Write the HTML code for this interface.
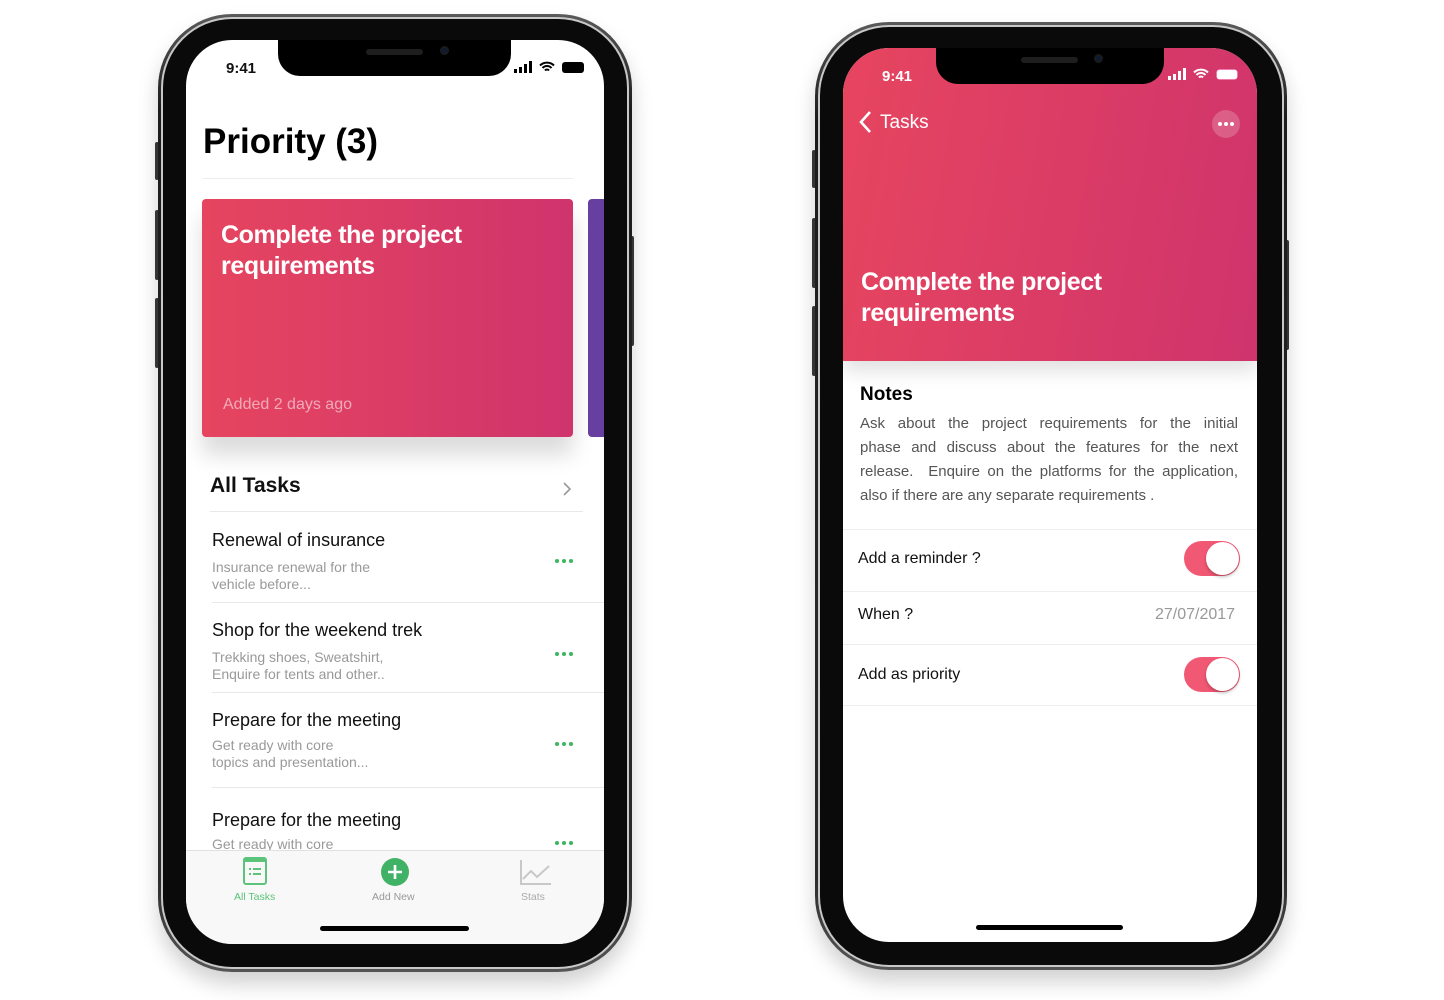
<!DOCTYPE html>
<html><head><meta charset="utf-8"><style>
*{margin:0;padding:0;box-sizing:border-box}
body{width:1444px;height:1000px;background:#fff;position:relative;overflow:hidden;font-family:"Liberation Sans",sans-serif}
.a{position:absolute}
.frame{position:absolute;border-radius:74px;background:linear-gradient(180deg,#5a5a5a,#1c1c1c 10%,#2a2a2a 90%,#555);box-shadow:0 12px 20px rgba(0,0,0,.18);}
.frame .in1{position:absolute;inset:3px;border-radius:71px;background:#c8c8c8}
.frame .in2{position:absolute;inset:5px;border-radius:69px;background:#0a0a0a}
.screen{position:absolute;border-radius:46px;overflow:hidden;background:#fff}
.notch{position:absolute;background:#000;border-radius:0 0 22px 22px}
.spk{position:absolute;height:6px;border-radius:3px;background:#1e1e1e}
.cam{position:absolute;width:9px;height:9px;border-radius:50%;background:#0e1a33;border:2px solid #1b1b1b}
.btn{position:absolute;background:#3a3a3a;border-radius:2px}
.t{position:absolute;white-space:nowrap;line-height:1}
.sep{position:absolute;height:1px;background:#e8e8e8}
.dots{position:absolute;width:18px;height:4px}
.dots i{position:absolute;top:0;width:4px;height:4px;border-radius:50%;background:#3cb55f}
.tog{position:absolute;width:56px;height:35px;border-radius:18px;background:#f15873}
.tog i{position:absolute;right:1px;top:1px;width:33px;height:33px;border-radius:50%;background:#fff;box-shadow:0 2px 3px rgba(0,0,0,.25)}
.jl{display:block;text-align:justify;text-align-last:justify;height:24px;white-space:nowrap}
</style></head><body>

<!-- LEFT PHONE -->
<div class="btn" style="left:155px;top:142px;width:4px;height:38px"></div>
<div class="btn" style="left:155px;top:210px;width:4px;height:70px"></div>
<div class="btn" style="left:155px;top:298px;width:4px;height:70px"></div>
<div class="btn" style="left:630px;top:236px;width:4px;height:110px"></div>
<div class="frame" style="left:158px;top:14px;width:474px;height:958px"><div class="in1"></div><div class="in2"></div></div>
<div class="screen" style="left:186px;top:40px;width:418px;height:904px">
  <div class="t" style="left:40px;top:21px;font-size:15px;font-weight:bold;color:#111">9:41</div>
  <svg class="a" style="left:328px;top:21px" width="72" height="14" viewBox="0 0 72 14">
    <rect x="0" y="8" width="3" height="4" fill="#000"/><rect x="5" y="6" width="3" height="6" fill="#000"/><rect x="10" y="3" width="3" height="9" fill="#000"/><rect x="15" y="0" width="3" height="12" fill="#000"/>
    <path d="M26 4.5a10 10 0 0 1 14 0M28.5 7a6 6 0 0 1 9 0M31 9.5a2.5 2.5 0 0 1 4 0" stroke="#000" stroke-width="2" fill="none"/>
    <rect x="48" y="1" width="22" height="11" rx="3" fill="#000"/>
  </svg>
  <div class="t" style="left:17px;top:84px;font-size:35px;font-weight:bold;color:#000">Priority (3)</div>
  <div class="sep" style="left:17px;top:138px;width:370px;background:#ececec"></div>
  <div class="a" style="left:16px;top:159px;width:371px;height:238px;border-radius:4px;background:linear-gradient(90deg,#e6455f,#cf346c);box-shadow:0 18px 22px rgba(0,0,0,.14)"></div>
  <div class="a" style="left:402px;top:159px;width:20px;height:238px;border-radius:4px;background:#673fa1"></div>
  <div class="t" style="left:35px;top:180px;font-size:25px;font-weight:bold;color:#fff;line-height:31px;white-space:normal;width:320px;letter-spacing:-0.4px">Complete the project requirements</div>
  <div class="t" style="left:37px;top:357px;font-size:16px;color:rgba(255,255,255,.55)">Added 2 days ago</div>
  <div class="t" style="left:24px;top:435px;font-size:21px;font-weight:bold;color:#111">All Tasks</div>
  <svg class="a" style="left:376px;top:441px" width="10" height="16"><path d="M2 2l6 6-6 6" stroke="#999" stroke-width="1.6" fill="none"/></svg>
  <div class="sep" style="left:24px;top:471px;width:373px"></div>

  <div class="t" style="left:26px;top:491px;font-size:18px;color:#111">Renewal of insurance</div>
  <div class="t" style="left:26px;top:519px;font-size:14px;color:#999;line-height:17px">Insurance renewal for the<br>vehicle before...</div>
  <div class="dots" style="left:369px;top:519px"><i style="left:0"></i><i style="left:7px"></i><i style="left:14px"></i></div>
  <div class="sep" style="left:26px;top:562px;width:392px"></div>

  <div class="t" style="left:26px;top:581px;font-size:18px;color:#111">Shop for the weekend trek</div>
  <div class="t" style="left:26px;top:609px;font-size:14px;color:#999;line-height:17px">Trekking shoes, Sweatshirt,<br>Enquire for tents and other..</div>
  <div class="dots" style="left:369px;top:612px"><i style="left:0"></i><i style="left:7px"></i><i style="left:14px"></i></div>
  <div class="sep" style="left:26px;top:652px;width:392px"></div>

  <div class="t" style="left:26px;top:671px;font-size:18px;color:#111">Prepare for the meeting</div>
  <div class="t" style="left:26px;top:697px;font-size:14px;color:#999;line-height:17px">Get ready with core<br>topics and presentation...</div>
  <div class="dots" style="left:369px;top:702px"><i style="left:0"></i><i style="left:7px"></i><i style="left:14px"></i></div>
  <div class="sep" style="left:26px;top:747px;width:392px"></div>

  <div class="t" style="left:26px;top:771px;font-size:18px;color:#111">Prepare for the meeting</div>
  <div class="t" style="left:26px;top:797px;font-size:14px;color:#999">Get ready with core</div>
  <div class="dots" style="left:369px;top:801px"><i style="left:0"></i><i style="left:7px"></i><i style="left:14px"></i></div>

  <div class="a" style="left:0;top:810px;width:418px;height:94px;background:#f8f8f8;border-top:1px solid #e0e0e0"></div>
  <svg class="a" style="left:57px;top:817px" width="24" height="28" viewBox="0 0 24 28"><rect x="1" y="1" width="22" height="26" rx="2" fill="none" stroke="#5cc47a" stroke-width="2"/><rect x="1" y="1" width="22" height="4" fill="#5cc47a"/><path d="M6 12h2M10 12h8M6 17h2M10 17h8" stroke="#5cc47a" stroke-width="2"/></svg>
  <div class="t" style="left:48px;top:852px;font-size:10.5px;color:#5cc47a">All Tasks</div>
  <svg class="a" style="left:194px;top:817px" width="30" height="30"><circle cx="15" cy="15" r="14" fill="#3fb266"/><path d="M15 8v14M8 15h14" stroke="#fff" stroke-width="2.6"/></svg>
  <div class="t" style="left:186px;top:852px;font-size:10.5px;color:#999">Add New</div>
  <svg class="a" style="left:334px;top:820px" width="32" height="26"><path d="M1 0v24h30" stroke="#c8c8c8" stroke-width="2" fill="none"/><path d="M3 19l8-8 6 6 12-11" stroke="#c8c8c8" stroke-width="2" fill="none"/></svg>
  <div class="t" style="left:335px;top:852px;font-size:10.5px;color:#aaa">Stats</div>
  <div class="a" style="left:134px;top:886px;width:149px;height:5px;border-radius:3px;background:#000"></div>
</div>
<div class="notch" style="left:278px;top:40px;width:233px;height:36px"></div>
<div class="spk" style="left:366px;top:49px;width:57px"></div>
<div class="cam" style="left:440px;top:46px"></div>

<!-- RIGHT PHONE -->
<div class="btn" style="left:812px;top:150px;width:4px;height:38px"></div>
<div class="btn" style="left:812px;top:218px;width:4px;height:70px"></div>
<div class="btn" style="left:812px;top:306px;width:4px;height:70px"></div>
<div class="btn" style="left:1285px;top:240px;width:4px;height:110px"></div>
<div class="frame" style="left:815px;top:22px;width:472px;height:948px"><div class="in1"></div><div class="in2"></div></div>
<div class="screen" style="left:843px;top:48px;width:414px;height:894px">
  <div class="a" style="left:0;top:0;width:414px;height:313px;background:linear-gradient(100deg,#e7455f,#cf346c);box-shadow:0 10px 18px rgba(0,0,0,.12)"></div>
  <div class="t" style="left:39px;top:21px;font-size:15px;font-weight:bold;color:#fff">9:41</div>
  <svg class="a" style="left:325px;top:20px" width="72" height="14" viewBox="0 0 72 14">
    <rect x="0" y="8" width="3" height="4" fill="#fff"/><rect x="5" y="6" width="3" height="6" fill="#fff"/><rect x="10" y="3" width="3" height="9" fill="#fff"/><rect x="15" y="0" width="3" height="12" fill="#fff"/>
    <path d="M26 4.5a10 10 0 0 1 14 0M28.5 7a6 6 0 0 1 9 0M31 9.5a2.5 2.5 0 0 1 4 0" stroke="#fff" stroke-width="2" fill="none"/>
    <rect x="48.5" y="1.5" width="21" height="10" rx="3" fill="#fff" stroke="#f3a" stroke-opacity=".3"/>
  </svg>
  <svg class="a" style="left:16px;top:62px" width="14" height="24"><path d="M11 2L2 12l9 10" stroke="#fff" stroke-width="2.6" fill="none"/></svg>
  <div class="t" style="left:37px;top:65px;font-size:19px;color:#fff">Tasks</div>
  <div class="a" style="left:369px;top:62px;width:28px;height:28px;border-radius:50%;background:rgba(255,255,255,.2)"></div>
  <div class="dots" style="left:375px;top:74px"><i style="left:0;background:#fff"></i><i style="left:6px;background:#fff"></i><i style="left:12px;background:#fff"></i></div>
  <div class="t" style="left:18px;top:219px;font-size:25px;font-weight:bold;color:#fff;line-height:31px;white-space:normal;width:320px;letter-spacing:-0.4px">Complete the project requirements</div>

  <div class="t" style="left:17px;top:337px;font-size:19px;font-weight:bold;color:#000">Notes</div>
  <div class="a" style="left:17px;top:364px;width:378px;font-size:15px;color:#555;line-height:24px">
    <span class="jl">Ask about the project requirements for the initial</span>
    <span class="jl">phase and discuss about the features for the next</span>
    <span class="jl">release.&nbsp; Enquire on the platforms for the application,</span>
    <span style="display:block;white-space:nowrap">also if there are any separate requirements .</span>
  </div>
  <div class="sep" style="left:0;top:481px;width:414px;background:#eee"></div>
  <div class="t" style="left:15px;top:503px;font-size:16px;color:#111">Add a reminder ?</div>
  <div class="tog" style="left:341px;top:493px"><i></i></div>
  <div class="sep" style="left:0;top:543px;width:414px;background:#eee"></div>
  <div class="t" style="left:15px;top:559px;font-size:16px;color:#111">When ?</div>
  <div class="t" style="left:312px;top:559px;font-size:16px;color:#999">27/07/2017</div>
  <div class="sep" style="left:0;top:596px;width:414px;background:#eee"></div>
  <div class="t" style="left:15px;top:619px;font-size:16px;color:#111">Add as priority</div>
  <div class="tog" style="left:341px;top:609px"><i></i></div>
  <div class="sep" style="left:0;top:657px;width:414px;background:#eee"></div>
  <div class="a" style="left:133px;top:877px;width:147px;height:5px;border-radius:3px;background:#000"></div>
</div>
<div class="notch" style="left:936px;top:48px;width:228px;height:36px"></div>
<div class="spk" style="left:1021px;top:57px;width:57px"></div>
<div class="cam" style="left:1094px;top:54px"></div>

</body></html>
